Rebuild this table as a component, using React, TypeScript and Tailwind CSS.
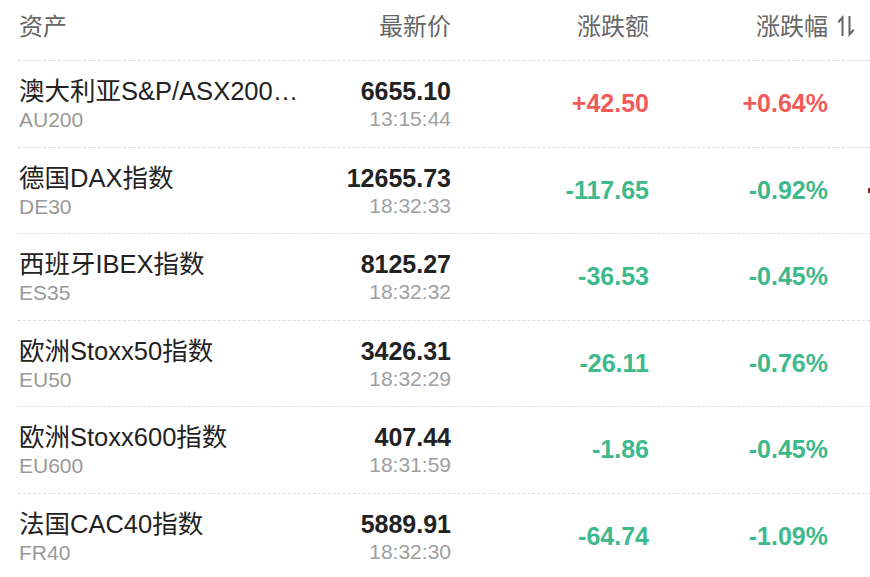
import React from "react";

type Row = {
  name: string;
  code: string;
  price: string;
  time: string;
  change: string;
  pct: string;
  up: boolean;
  mark?: boolean;
};

const rows: Row[] = [
  { name: "澳大利亚S&P/ASX200…", code: "AU200", price: "6655.10", time: "13:15:44", change: "+42.50", pct: "+0.64%", up: true },
  { name: "德国DAX指数", code: "DE30", price: "12655.73", time: "18:32:33", change: "-117.65", pct: "-0.92%", up: false, mark: true },
  { name: "西班牙IBEX指数", code: "ES35", price: "8125.27", time: "18:32:32", change: "-36.53", pct: "-0.45%", up: false },
  { name: "欧洲Stoxx50指数", code: "EU50", price: "3426.31", time: "18:32:29", change: "-26.11", pct: "-0.76%", up: false },
  { name: "欧洲Stoxx600指数", code: "EU600", price: "407.44", time: "18:31:59", change: "-1.86", pct: "-0.45%", up: false },
  { name: "法国CAC40指数", code: "FR40", price: "5889.91", time: "18:32:30", change: "-64.74", pct: "-1.09%", up: false },
];

const grid = "grid grid-cols-[282px_151px_198px_179px_1fr]";

function SortIcon() {
  return (
    <svg width="16" height="22" viewBox="0 0 16 22" fill="none" stroke="#666" strokeWidth="2" strokeLinecap="square">
      <path d="M4.5 20V2.5L1 6.5" />
      <path d="M11.5 2V19.5L15 15.5" />
    </svg>
  );
}

export default function App() {
  return (
    <div
      className="w-[870px] h-[577px] overflow-hidden bg-white pl-[18px]"
      style={{ fontFamily: '"Liberation Sans", "Noto Sans CJK SC", sans-serif' }}
    >
      <div className={`${grid} h-[61px] border-b border-dashed border-[#dedede] pt-[12px] text-[24px] leading-[30px] text-[#666]`}>
        <div className="pl-[1px]">资产</div>
        <div className="text-right">最新价</div>
        <div className="text-right">涨跌额</div>
        <div className="text-right">涨跌幅</div>
        <div className="pl-[10px] pt-[3px]">
          <SortIcon />
        </div>
      </div>

      {rows.map((r) => (
        <div key={r.code} className={`${grid} h-[86.5px] border-b border-dashed border-[#dedede]`}>
          <div className="pt-[15px] pl-[1px]">
            <div className="text-[25.5px] leading-[30px] text-[#222] whitespace-nowrap">{r.name}</div>
            <div className="text-[21px] leading-[28px] text-[#999]">{r.code}</div>
          </div>
          <div className="pt-[15px] text-right">
            <div className="text-[25px] leading-[30px] font-bold text-[#222]">{r.price}</div>
            <div className="text-[21px] leading-[26px] text-[#a0a0a0]">{r.time}</div>
          </div>
          <div
            className={`flex items-center justify-end text-[25px] font-bold ${
              r.up ? "text-[#f25a5a]" : "text-[#3db98c]"
            }`}
          >
            {r.change}
          </div>
          <div
            className={`flex items-center justify-end text-[25px] font-bold ${
              r.up ? "text-[#f25a5a]" : "text-[#3db98c]"
            }`}
          >
            {r.pct}
          </div>
          <div className="flex items-center justify-end">
            {r.mark && <div className="w-[2px] h-[5px] bg-[#8a2a2a]" />}
          </div>
        </div>
      ))}
    </div>
  );
}
